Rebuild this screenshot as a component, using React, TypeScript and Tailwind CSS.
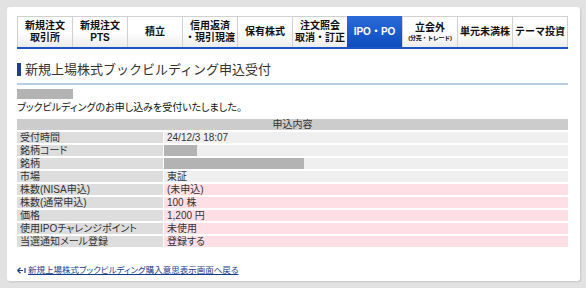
import React from 'react';

const font = "font-['Liberation_Sans','Noto_Sans_CJK_JP',sans-serif]";

type Tab = { lines: string[]; active?: boolean; small?: boolean };

const tabs: Tab[] = [
  { lines: ['新規注文', '取引所'] },
  { lines: ['新規注文', 'PTS'] },
  { lines: ['積立'] },
  { lines: ['信用返済', '・現引現渡'] },
  { lines: ['保有株式'] },
  { lines: ['注文照会', '取消・訂正'] },
  { lines: ['IPO・PO'], active: true },
  { lines: ['立会外', '(分売・トレード)'], small: true },
  { lines: ['単元未満株'] },
  { lines: ['テーマ投資'] },
];

type Row = { label: string; value?: string; pink?: boolean; block?: 'short' | 'long' };

const rows: Row[] = [
  { label: '受付時間', value: '24/12/3 18:07' },
  { label: '銘柄コード', block: 'short' },
  { label: '銘柄', block: 'long' },
  { label: '市場', value: '東証' },
  { label: '株数(NISA申込)', value: '(未申込)', pink: true },
  { label: '株数(通常申込)', value: '100 株', pink: true },
  { label: '価格', value: '1,200 円', pink: true },
  { label: '使用IPOチャレンジポイント', value: '未使用', pink: true },
  { label: '当選通知メール登録', value: '登録する', pink: true },
];

function TabItem({ tab }: { tab: Tab }) {
  if (tab.active) {
    return (
      <div className="flex items-center justify-center bg-gradient-to-b from-[#2a6ad8] to-[#0c4cbf] text-white text-[10px] font-bold leading-[12px]">
        {tab.lines[0]}
      </div>
    );
  }
  return (
    <div className="flex flex-col items-center justify-center border-l border-t border-[#d0d0d0] bg-gradient-to-b from-white via-white to-[#ececec] text-[#111] text-[10px] font-bold leading-[12px] whitespace-nowrap">
      <span>{tab.lines[0]}</span>
      {tab.lines[1] && (
        <span className={tab.small ? 'text-[6px] leading-[8px] tracking-tighter' : ''}>{tab.lines[1]}</span>
      )}
    </div>
  );
}

function BackArrow() {
  return (
    <svg width="9" height="7" viewBox="0 0 9 7" className="shrink-0">
      <path d="M0.5 3.5 L3.5 0.8 M0.5 3.5 L3.5 6.2 M0.5 3.5 H6" stroke="#1a3c8c" strokeWidth="1.2" fill="none" />
      <path d="M8 1 V6" stroke="#1a3c8c" strokeWidth="1.2" />
    </svg>
  );
}

export default function App() {
  return (
    <div className={`w-[586px] h-[288px] bg-[#e2e2e2] pt-[7px] pl-[7px] pr-[6px] pb-[7px] ${font}`}>
      <div className="h-full bg-white rounded-[3px] shadow-[1px_1px_2px_rgba(0,0,0,0.12)] pl-[10px] pr-[12px] pt-[9px]">
        {/* tabs */}
        <div className="grid grid-cols-10 h-[31px] border-r border-[#d0d0d0]">
          {tabs.map((t, i) => (
            <TabItem key={i} tab={t} />
          ))}
        </div>
        <div className="h-[2px] bg-[#1b55c6]" />

        {/* heading */}
        <div className="mt-[13px] flex items-center gap-[4px] h-[15px]">
          <div className="w-[4px] h-[13px] bg-[#1d3f8e]" />
          <h1 className="text-[13px] leading-[15px] text-[#333] font-normal">新規上場株式ブックビルディング申込受付</h1>
        </div>
        <div className="mt-[6px] h-[2px] bg-[#bccde6]" />

        <div className="mt-[4px] w-[56px] h-[10px] bg-[#b3b3b3]" />
        <p className="mt-[2px] text-[10px] leading-[14px] text-[#111] [font-feature-settings:'palt']">
          ブックビルディングのお申し込みを受付いたしました。
        </p>

        {/* table */}
        <div className="mt-[4px] grid grid-cols-[146px_1fr] gap-x-px gap-y-[2px] text-[10px] leading-[11px] text-[#333] [font-feature-settings:'palt']">
          <div className="col-span-2 h-[11px] bg-[#cccccc] text-center">申込内容</div>
          {rows.map((r, i) => (
            <React.Fragment key={i}>
              <div className="h-[11px] bg-[#dddddd] pl-[3px] whitespace-nowrap">{r.label}</div>
              <div className={`h-[11px] pl-[3px] ${r.pink ? 'bg-[#ffdfe6]' : 'bg-[#efefef]'}`}>
                {r.value}
                {r.block === 'short' && <div className="-ml-[3px] w-[33px] h-[11px] bg-[#b3b3b3]" />}
                {r.block === 'long' && <div className="-ml-[3px] w-[140px] h-[11px] bg-[#b3b3b3]" />}
              </div>
            </React.Fragment>
          ))}
        </div>

        {/* back link */}
        <div className="mt-[17px] flex items-center gap-[2px]">
          <BackArrow />
          <a href="#" className="text-[8.5px] leading-[12px] text-[#1a3c8c] underline [font-feature-settings:'palt']">
            新規上場株式ブックビルディング購入意思表示画面へ戻る
          </a>
        </div>
      </div>
    </div>
  );
}
